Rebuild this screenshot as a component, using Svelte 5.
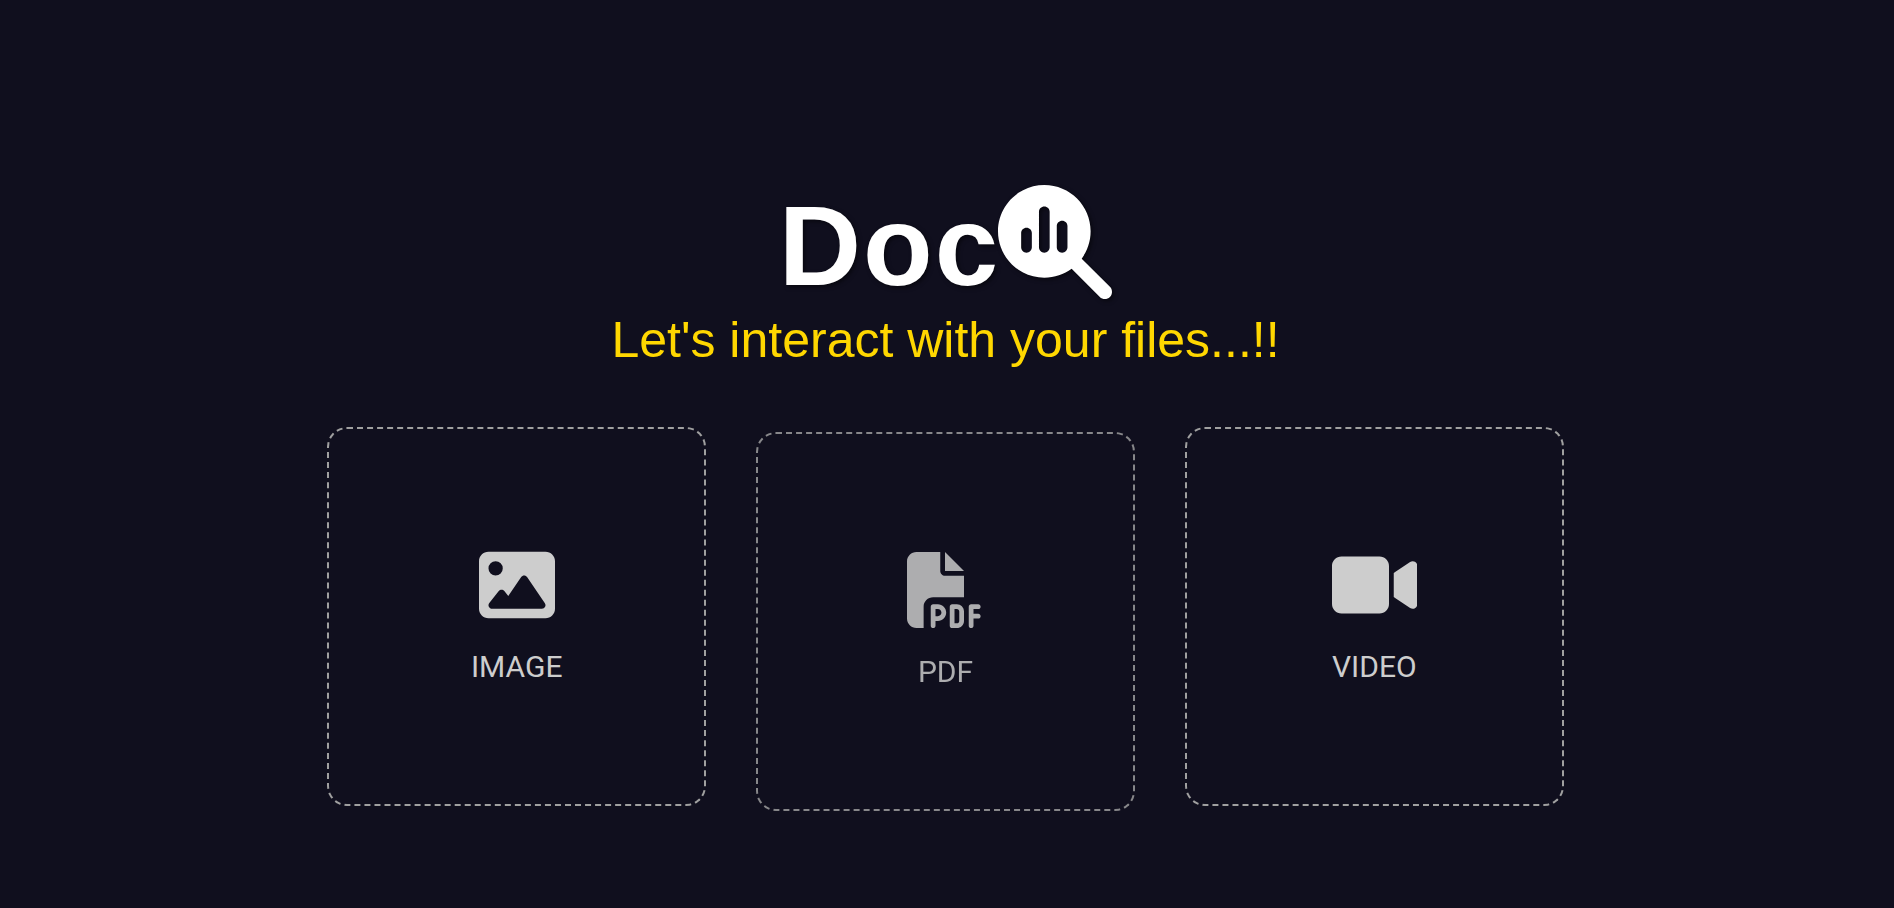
<script>
  const sources = [
    {
      label: 'IMAGE',
      viewBox: '0 0 512 512',
      path: 'M0 96C0 60.7 28.7 32 64 32l384 0c35.3 0 64 28.7 64 64l0 320c0 35.3-28.7 64-64 64L64 480c-35.3 0-64-28.7-64-64L0 96zM323.8 202.5c-4.5-6.6-11.9-10.5-19.8-10.5s-15.4 3.9-19.8 10.5l-87 127.6L170.7 297c-4.6-5.7-11.5-9-18.7-9s-14.2 3.3-18.7 9l-64 80c-5.8 7.2-6.9 17.1-2.9 25.4s12.4 13.6 21.6 13.6l96 0 32 0 208 0c8.9 0 17.1-4.9 21.2-12.8s3.6-17.4-1.4-24.7l-120-176zM112 192a48 48 0 1 0 0-96 48 48 0 1 0 0 96z'
    },
    {
      label: 'PDF',
      active: true,
      viewBox: '0 0 512 512',
      path: 'M0 64C0 28.7 28.7 0 64 0L224 0l0 128c0 17.7 14.3 32 32 32l128 0 0 144-208 0c-35.3 0-64 28.7-64 64l0 144-48 0c-35.3 0-64-28.7-64-64L0 64zm384 64l-128 0L256 0 384 128zM176 352l32 0c30.9 0 56 25.1 56 56s-25.1 56-56 56l-16 0 0 32c0 8.8-7.2 16-16 16s-16-7.2-16-16l0-48 0-80c0-8.8 7.2-16 16-16zm32 80c13.3 0 24-10.7 24-24s-10.7-24-24-24l-16 0 0 48 16 0zm96-80l32 0c26.5 0 48 21.5 48 48l0 64c0 26.5-21.5 48-48 48l-32 0c-8.8 0-16-7.2-16-16l0-128c0-8.8 7.2-16 16-16zm32 128c8.8 0 16-7.2 16-16l0-64c0-8.8-7.2-16-16-16l-16 0 0 96 16 0zm80-112c0-8.8 7.2-16 16-16l48 0c8.8 0 16 7.2 16 16s-7.2 16-16 16l-32 0 0 32 32 0c8.8 0 16 7.2 16 16s-7.2 16-16 16l-32 0 0 48c0 8.8-7.2 16-16 16s-16-7.2-16-16l0-64 0-64z'
    },
    {
      label: 'VIDEO',
      viewBox: '0 0 576 512',
      path: 'M0 128C0 92.7 28.7 64 64 64l256 0c35.3 0 64 28.7 64 64l0 256c0 35.3-28.7 64-64 64L64 448c-35.3 0-64-28.7-64-64L0 128zM559.1 99.8c10.4 5.6 16.9 16.4 16.9 28.2l0 256c0 11.8-6.5 22.6-16.9 28.2s-23 5-32.9-1.6l-96-64L416 337.1l0-17.1 0-128 0-17.1 14.2-9.5 96-64c9.8-6.5 22.4-7.2 32.9-1.6z'
    }
  ];
</script>

<main>
  <header>
    <h1>
      Doc<svg class="logo" viewBox="0 0 512 512" role="img" aria-label="Q">
        <path d="M416 208c0 45.9-14.9 88.3-40 122.7L502.6 457.4c12.5 12.5 12.5 32.8 0 45.3s-32.8 12.5-45.3 0L330.7 376c-34.4 25.2-76.8 40-122.7 40C93.1 416 0 322.9 0 208S93.1 0 208 0S416 93.1 416 208zm-312 8l0 64c0 13.3 10.7 24 24 24s24-10.7 24-24l0-64c0-13.3-10.7-24-24-24s-24 10.7-24 24zm80-96l0 160c0 13.3 10.7 24 24 24s24-10.7 24-24l0-160c0-13.3-10.7-24-24-24s-24 10.7-24 24zm80 64l0 96c0 13.3 10.7 24 24 24s24-10.7 24-24l0-96c0-13.3-10.7-24-24-24s-24 10.7-24 24z" />
      </svg>
    </h1>
    <p>Let's interact with your files...!!</p>
  </header>

  <div class="cards">
    {#each sources as source}
      <button type="button" class="card" class:active={source.active}>
        <svg viewBox={source.viewBox} aria-hidden="true"><path d={source.path} /></svg>
        <span>{source.label}</span>
      </button>
    {/each}
  </div>
</main>

<style>
  :global(body) {
    margin: 0;
    background: #100f1e;
  }

  main {
    box-sizing: border-box;
    min-height: 100vh;
    padding: 182px 3px 96px 0;
    display: flex;
    flex-direction: column;
    align-items: center;
    gap: 57px;
    font-family: "Liberation Sans", Arial, sans-serif;
  }

  header {
    text-align: center;
  }

  h1 {
    margin: 0;
    font-size: 114px;
    line-height: 128px;
    font-weight: 700;
    letter-spacing: 2px;
    color: #fff;
    text-shadow: 2px 2px 4px rgba(0, 0, 0, 0.5);
  }

  .logo {
    height: 1em;
    margin-left: -2px;
    vertical-align: -14px;
    overflow: visible;
    fill: currentColor;
    filter: drop-shadow(2px 2px 2px rgba(0, 0, 0, 0.5));
  }

  p {
    margin: 0;
    font-size: 50px;
    line-height: 60px;
    color: #ffd700;
  }

  .cards {
    width: 100%;
    display: flex;
    justify-content: center;
    align-items: flex-start;
    gap: 50px;
  }

  .card {
    box-sizing: border-box;
    width: 20vw;
    aspect-ratio: 1;
    padding: 0;
    display: flex;
    flex-direction: column;
    align-items: center;
    justify-content: center;
    gap: 24px;
    border: 2px dashed #a0a0a0;
    border-radius: 20px;
    background: transparent;
    color: #cdcdcd;
    font-family: Roboto, sans-serif;
    font-size: 30px;
    line-height: 39px;
    cursor: pointer;
  }

  .card.active {
    transform: translateY(5px);
    opacity: 0.83;
  }

  .card svg {
    height: 76px;
    fill: currentColor;
  }
</style>
